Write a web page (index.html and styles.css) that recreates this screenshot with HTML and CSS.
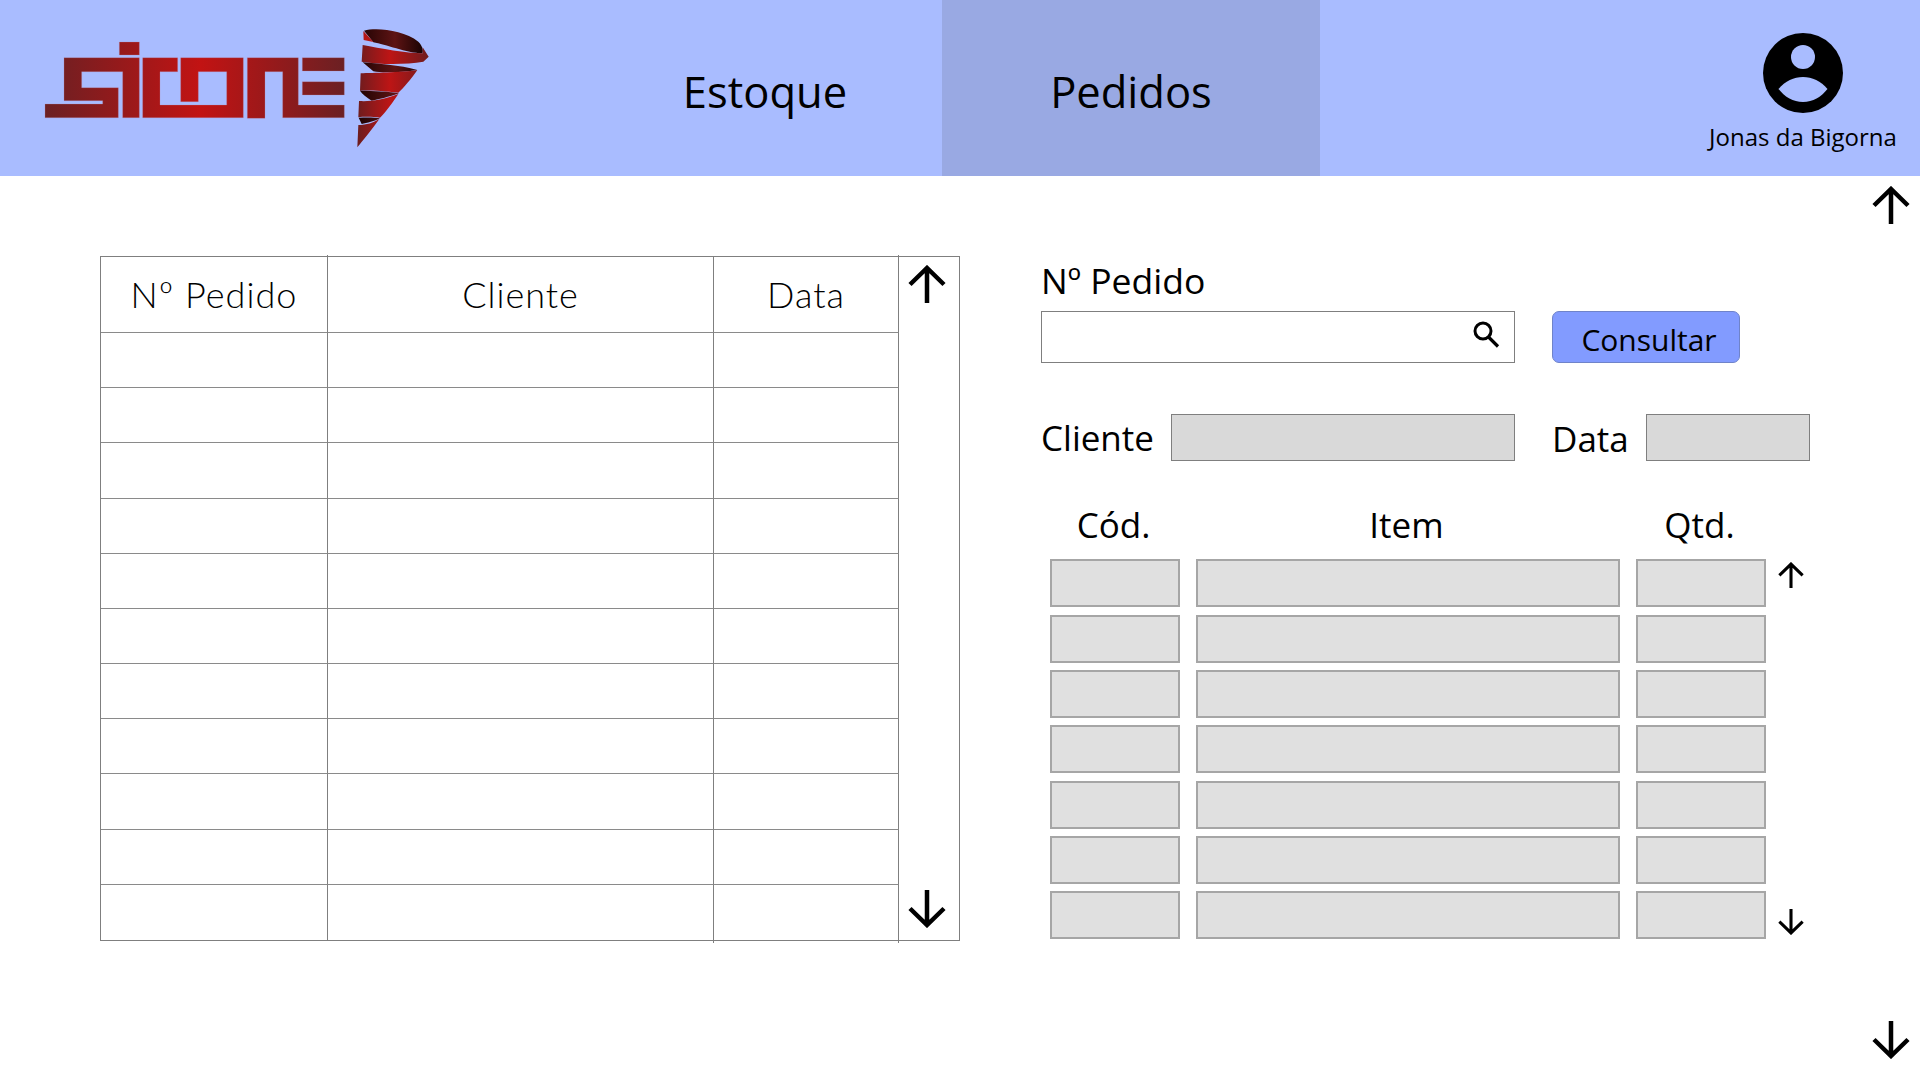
FILE: index.html
```html
<!DOCTYPE html>
<html lang="pt-BR">
<head>
<meta charset="utf-8">
<title>Sicone - Pedidos</title>
<link rel="stylesheet" href="styles.css">
</head>
<body>
<svg class="defs" width="0" height="0" aria-hidden="true">
  <defs>
    <symbol id="arrow-up" viewBox="0 0 38 38"><path d="M19 38V3M2 19.500 19 3l17 16.500" fill="none" stroke="#000" stroke-width="4.500"/></symbol>
    <symbol id="arrow-down" viewBox="0 0 38 38"><path d="M19 0v35M2 18.500 19 35l17-16.500" fill="none" stroke="#000" stroke-width="4.500"/></symbol>
  </defs>
</svg>
<header class="topbar">
  <div class="brand">
    <svg class="logo" viewBox="30 20 420 140" width="420" height="140" role="img" aria-label="Sicone">
      <defs>
        <linearGradient id="wordGrad" gradientUnits="userSpaceOnUse" x1="45" y1="0" x2="943" y2="0">
          <stop offset="0" stop-color="#6b2023"/><stop offset=".52" stop-color="#c21313"/><stop offset="1" stop-color="#6b2023"/>
        </linearGradient>
        <linearGradient id="bandGrad" gradientUnits="userSpaceOnUse" x1="55" y1="0" x2="266" y2="0">
          <stop offset="0" stop-color="#6e1c1e"/><stop offset=".45" stop-color="#bd1515"/><stop offset="1" stop-color="#6e1c1e"/>
        </linearGradient>
        <linearGradient id="darkGrad" gradientUnits="userSpaceOnUse" x1="60" y1="0" x2="250" y2="0">
          <stop offset="0" stop-color="#200303"/><stop offset=".55" stop-color="#5e1414"/><stop offset="1" stop-color="#180202"/>
        </linearGradient>
      </defs>
      <g transform="translate(30 30) scale(.33333)" fill="url(#wordGrad)" stroke="#b98aa8" stroke-opacity=".55" stroke-width="1.500">
        <path d="M268 36h60v39h-60z"/>
        <path d="M102 83h226v180h-50V125H155v48h110v90H45v-41h173v-10H102z"/>
        <path d="M338 83h105v42h-53v100h200V125h-85v90h-53V83h188v180H338z"/>
        <path d="M652 83h153v142h138v38H758V125h-53v140h-53z"/>
        <path d="M817 83h126v40H817zM817 155h126v40H817z"/>
      </g>
      <g transform="translate(340 20) scale(.33333)">
        <path fill="url(#darkGrad)" d="M72 32C110 22 190 30 235 65 250 80 250 95 247 100 200 100 135 72 100 67Z"/>
        <path fill="#b51717" d="M70 33l30 33-29-6z"/>
        <path fill="url(#bandGrad)" d="M68 75C120 85 200 100 248 100V82L266 110 250 125C200 133 130 135 65 125Z"/>
        <path fill="url(#darkGrad)" d="M68 127C110 131 180 135 232 150 190 156 130 160 100 154Z"/>
        <path fill="url(#bandGrad)" d="M62 160C100 158 180 158 232 150 215 175 190 205 175 218 130 213 85 210 60 212Z"/>
        <path fill="url(#darkGrad)" d="M60 212C100 212 150 215 177 220 150 230 110 240 95 242 80 232 66 222 60 212Z"/>
        <path fill="url(#bandGrad)" d="M57 243C90 245 130 240 175 222 160 245 135 280 120 293 100 290 70 290 55 292Z"/>
        <path fill="url(#darkGrad)" d="M56 293C80 292 105 292 120 295 105 303 80 310 65 312Z"/>
        <path fill="url(#bandGrad)" d="M55 315C80 315 100 308 118 297 95 330 70 360 52 382Z"/>
      </g>
    </svg>
  </div>
  <nav class="nav">
    <a class="tab tab-stock">Estoque</a>
    <a class="tab tab-orders">Pedidos</a>
  </nav>
  <div class="user">
    <svg class="avatar" viewBox="0 0 80 80" width="80" height="80" aria-hidden="true">
      <circle cx="40" cy="40" r="40" fill="#000"/>
      <circle cx="40" cy="24" r="12" fill="#a9bcff"/>
      <path d="M15.500 56C22 48 31 44 40 44s18 4 24.500 12C58 64 50 69 40 69S22 64 15.500 56Z" fill="#a9bcff"/>
    </svg>
    <span class="user-name">Jonas da Bigorna</span>
  </div>
</header>

<main class="content">
  <section class="orders">
    <div class="orders-grid">
      <div class="oh tick-top">Nº Pedido</div><div class="oh">Cliente</div><div class="oh tick-top">Data</div>
      <div class="oc"></div><div class="oc"></div><div class="oc"></div>
      <div class="oc"></div><div class="oc"></div><div class="oc"></div>
      <div class="oc"></div><div class="oc"></div><div class="oc"></div>
      <div class="oc"></div><div class="oc"></div><div class="oc"></div>
      <div class="oc"></div><div class="oc"></div><div class="oc"></div>
      <div class="oc"></div><div class="oc"></div><div class="oc"></div>
      <div class="oc"></div><div class="oc"></div><div class="oc"></div>
      <div class="oc"></div><div class="oc"></div><div class="oc"></div>
      <div class="oc"></div><div class="oc"></div><div class="oc"></div>
      <div class="oc"></div><div class="oc"></div><div class="oc"></div>
      <div class="oc last"></div><div class="oc last tick-bottom"></div><div class="oc last tick-bottom"></div>
    </div>
    <div class="orders-scroll">
      <svg class="arrow"><use href="#arrow-up"/></svg>
      <svg class="arrow"><use href="#arrow-down"/></svg>
    </div>
  </section>

  <section class="detail">
    <div class="field-title">Nº Pedido</div>
    <div class="search-row">
      <div class="search">
        <input class="search-input" type="text" aria-label="Nº Pedido">
        <svg class="search-icon" viewBox="0 0 28 28" width="28" height="28" aria-hidden="true">
          <circle cx="11" cy="10" r="8" fill="none" stroke="#000" stroke-width="3"/>
          <path d="M16.500 16l9.500 9.500" fill="none" stroke="#000" stroke-width="3.200"/>
        </svg>
      </div>
      <button class="consult" type="button">Consultar</button>
    </div>
    <div class="info-row">
      <span class="info-label label-client">Cliente</span>
      <div class="readout readout-client"></div>
      <span class="info-label label-date">Data</span>
      <div class="readout readout-date"></div>
    </div>
    <div class="items">
      <div class="ih">Cód.</div><div class="ih">Item</div><div class="ih">Qtd.</div><div></div>
      <div class="ic"></div><div class="ic"></div><div class="ic"></div><svg class="mini up"><use href="#arrow-up"/></svg>
      <div class="ic"></div><div class="ic"></div><div class="ic"></div><div></div>
      <div class="ic"></div><div class="ic"></div><div class="ic"></div><div></div>
      <div class="ic"></div><div class="ic"></div><div class="ic"></div><div></div>
      <div class="ic"></div><div class="ic"></div><div class="ic"></div><div></div>
      <div class="ic"></div><div class="ic"></div><div class="ic"></div><div></div>
      <div class="ic"></div><div class="ic"></div><div class="ic"></div><svg class="mini down"><use href="#arrow-down"/></svg>
    </div>
  </section>

  <aside class="page-scroll">
    <svg class="arrow"><use href="#arrow-up"/></svg>
    <svg class="arrow"><use href="#arrow-down"/></svg>
  </aside>
</main>
</body>
</html>
```
FILE: styles.css
```css
* { box-sizing: border-box; }
html, body { margin: 0; height: 100%; }
body {
  width: 1920px;
  height: 1080px;
  overflow: hidden;
  background: #fff;
  color: #000;
  font-family: "Open Sans", "Noto Sans", sans-serif;
  font-weight: 375;
  display: flex;
  flex-direction: column;
}
.defs { position: absolute; }

/* top bar */
.topbar {
  height: 176px;
  flex: none;
  background: #a9bcff;
  display: flex;
}
.brand { width: 588px; flex: none; padding: 20px 0 0 30px; }
.logo { display: block; }
.nav { display: flex; }
.tab {
  display: flex;
  align-items: center;
  justify-content: center;
  padding-top: 6px;
  font-size: 43.500px;
  color: #000;
}
.tab-stock { width: 354px; }
.tab-orders { width: 378px; background: #99a9e3; }
.user {
  margin-left: auto;
  width: 234px;
  padding-top: 33px;
  display: flex;
  flex-direction: column;
  align-items: center;
}
.avatar { display: block; margin-bottom: 8px; }
.user-name { font-size: 24px; line-height: 32px; white-space: nowrap; }

/* main */
.content {
  flex: 1;
  display: flex;
  padding-left: 100px;
}
.orders {
  width: 860px;
  height: 685px;
  margin-top: 80px;
  flex: none;
  display: flex;
  border: 1px solid #7f7f7f;
}
.orders-grid {
  display: grid;
  grid-template-columns: 227px 386px 185px;
  grid-template-rows: 76px repeat(11, 1fr);
  flex: none;
}
.oh, .oc {
  position: relative;
  border-right: 1px solid #7f7f7f;
  border-bottom: 1px solid #8a8a8a;
}
.oc.last { border-bottom: 0; }
.oh {
  display: flex;
  align-items: center;
  justify-content: center;
  padding-bottom: 2px;
  font-family: "Lato", sans-serif;
  font-weight: 300;
  font-size: 36px;
  letter-spacing: 1px;
}
.tick-top::after,
.tick-bottom::after {
  content: "";
  position: absolute;
  right: -1px;
  width: 1px;
  height: 2px;
  background: #7f7f7f;
}
.tick-top::after { top: -2px; }
.tick-bottom::after { bottom: -3px; }
.orders-scroll {
  flex: 1;
  display: flex;
  flex-direction: column;
  justify-content: space-between;
  align-items: center;
  padding: 8px 4px 12px 0;
}
.arrow { display: block; width: 38px; height: 38px; flex: none; }

/* detail */
.detail {
  width: 769px;
  margin-left: 81px;
  margin-top: 80px;
  flex: none;
}
.field-title { height: 55px; font-size: 35.500px; line-height: 49px; }
.search-row { display: flex; gap: 37px; height: 52px; }
.search { position: relative; width: 474px; }
.search-input {
  display: block;
  width: 100%;
  height: 100%;
  border: 1px solid #7f7f7f;
  background: #fff;
  padding: 0;
  border-radius: 0;
  outline: 0;
}
.search-icon { position: absolute; left: 431px; top: 10px; }
.consult {
  width: 188px;
  padding: 5px 0 0 6px;
  border: 1px solid #6f83c9;
  border-radius: 7px;
  background: #829bff;
  color: #000;
  font-family: inherit;
  font-weight: 375;
  font-size: 30px;
}
.info-row {
  display: flex;
  align-items: center;
  height: 47px;
  margin-top: 51px;
}
.info-label { font-size: 35px; line-height: 46px; }
.label-client { width: 130px; }
.label-date { width: 94px; margin-left: 37px; padding-top: 2px; }
.readout { height: 47px; border: 1px solid #7f7f7f; background: #d9d9d9; }
.readout-client { width: 344px; }
.readout-date { width: 164px; }

.items {
  display: grid;
  grid-template-columns: 130px 424px 130px 40px;
  grid-template-rows: 60px repeat(7, 48px);
  column-gap: 16px;
  row-gap: 7.330px;
  margin: 31px 0 0 8.500px;
}
.ih {
  text-align: center;
  font-size: 35px;
  line-height: 66px;
  margin-left: -2px;
}
.ic { border: 2px solid #a6a6a6; background: #e0e0e0; }
.mini { width: 26px; height: 26px; margin-left: -4px; display: block; }
.mini.up { align-self: start; margin-top: 3px; }
.mini.down { align-self: end; margin-bottom: 4px; }

.page-scroll {
  margin-left: auto;
  margin-right: 10px;
  padding: 10px 0 21px;
  display: flex;
  flex-direction: column;
  justify-content: space-between;
}
```
